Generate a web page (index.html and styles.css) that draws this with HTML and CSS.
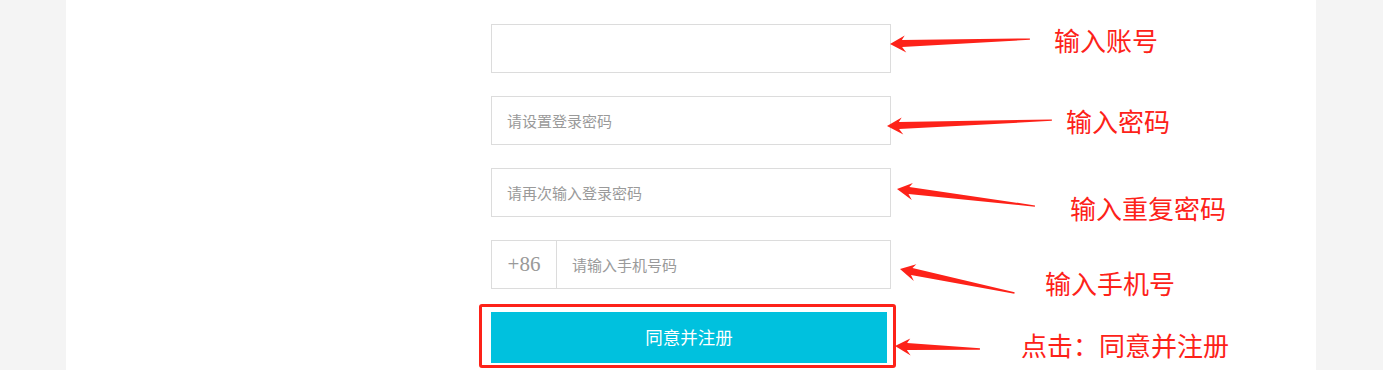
FILE: index.html
```html
<!DOCTYPE html>
<html lang="zh-CN">
    <head>
        <meta charset="UTF-8">
        <title>注册</title>
        <link rel="stylesheet" href="styles.css">
    </head>
    <body>
        <div class="panel">
            <form class="reg-form">
                <input class="field" type="text" placeholder="">
                <input class="field" type="password" placeholder="请设置登录密码">
                <input class="field" type="password" placeholder="请再次输入登录密码">
                <div class="phone-row">
                    <span class="prefix">+86</span>
                    <input class="field phone" type="text" placeholder="请输入手机号码">
                </div>
                <button class="submit" type="button">同意并注册</button>
            </form>
        </div>

        <!-- 标注 -->
        <div class="mark-box"></div>
        <svg class="arrows" width="1383" height="370" viewBox="0 0 1383 370">
            <polygon transform="translate(890 44) rotate(-2.05)" points="0,0 15,-8 12,-3.5 140,-0.6 140,0.8 12,3.5 16,9"/>
            <polygon transform="translate(887 126) rotate(-2.08)" points="0,0 15,-8 12,-3.5 165,-0.6 165,0.8 12,3.5 16,9"/>
            <polygon transform="translate(897 189) rotate(7.02)" points="0,0 15,-8 12,-3.5 139,-0.6 139,0.8 12,3.5 16,9"/>
            <polygon transform="translate(900 269) rotate(11.8)" points="0,0 15,-8 12,-3.5 117,-0.6 117,0.8 12,3.5 16,9"/>
            <polygon transform="translate(895 346) rotate(2)" points="0,0 15,-8 12,-3.5 85,-0.6 85,0.8 12,3.5 16,9"/>
        </svg>
        <div class="label l1">输入账号</div>
        <div class="label l2">输入密码</div>
        <div class="label l3">输入重复密码</div>
        <div class="label l4">输入手机号</div>
        <div class="label l5">点击：同意并注册</div>
    </body>
</html>
```

FILE: styles.css
```css
body {
    position: relative;
    margin: 0;
    height: 370px;
    overflow: hidden;
    background-color: #f4f4f4;
    font-family: "Noto Sans CJK SC", "Microsoft YaHei", sans-serif;
}
.panel {
    width: 1250px;
    height: 370px;
    margin-left: 66px;
    background-color: #fff;
}
.reg-form {
    display: flex;
    flex-direction: column;
    gap: 23px;
    width: 400px;
    margin: 0 auto;
    padding-top: 24px;
}
.field {
    box-sizing: border-box;
    width: 400px;
    height: 49px;
    margin: 0;
    padding: 0 15px;
    border: 1px solid #dcdcdc;
    outline: none;
    font-family: inherit;
    font-size: 15px;
    color: #333;
    background: #fff;
}
.field::placeholder {
    color: #9a9a9a;
}
.phone-row {
    display: flex;
    align-items: flex-start;
}
.prefix {
    box-sizing: border-box;
    display: flex;
    align-items: center;
    justify-content: center;
    width: 65px;
    height: 49px;
    border: 1px solid #dcdcdc;
    border-right: none;
    font-family: "Liberation Serif", serif;
    font-size: 21px;
    color: #999;
}
.phone {
    flex: 1;
    width: auto;
}
.submit {
    width: 396px;
    height: 51px;
    border: none;
    padding: 0 0 3px;
    background-color: #00c1de;
    color: #fff;
    font-family: inherit;
    font-size: 17.5px;
    cursor: pointer;
}

/* 标注层 */
.mark-box {
    position: absolute;
    left: 479px;
    top: 304px;
    box-sizing: border-box;
    width: 417px;
    height: 64px;
    border: 3px solid #fd2219;
    border-radius: 3px;
}
.arrows {
    position: absolute;
    left: 0;
    top: 0;
}
.arrows polygon {
    fill: #fd2219;
}
.label {
    position: absolute;
    font-size: 26px;
    line-height: 26px;
    color: #fd2219;
    white-space: nowrap;
}
.l1 { left: 1054px; top: 27px; }
.l2 { left: 1066px; top: 108px; }
.l3 { left: 1070px; top: 195px; }
.l4 { left: 1045px; top: 270px; }
.l5 { left: 1021px; top: 332px; }
```
